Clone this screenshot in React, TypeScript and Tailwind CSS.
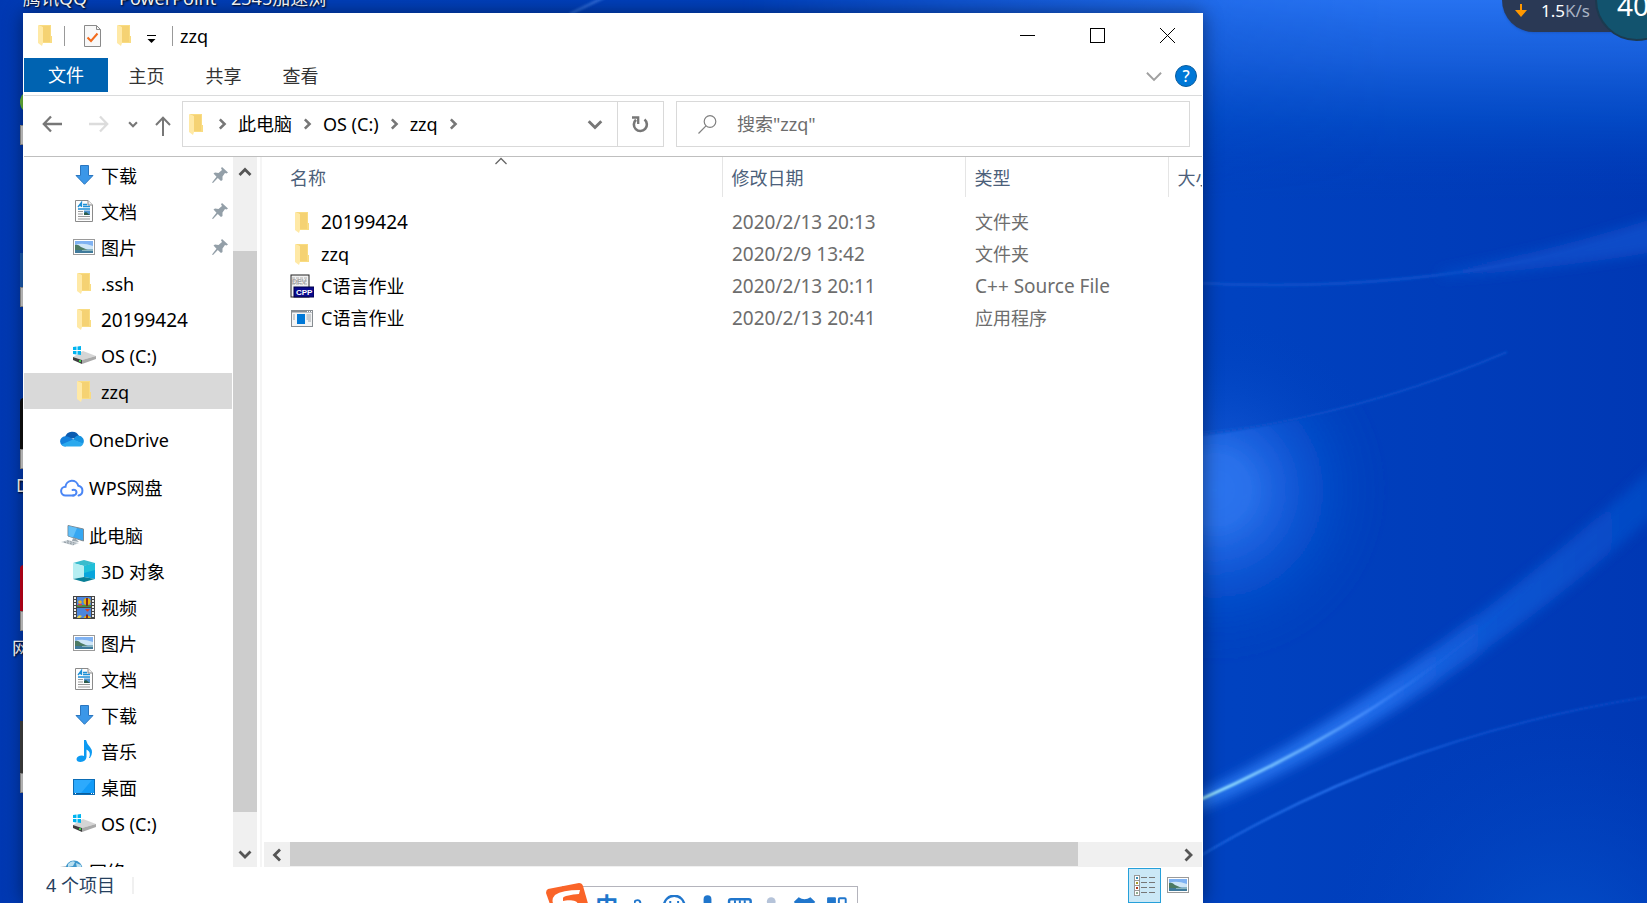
import { useState, type ReactNode } from 'react';

type IconName =
  | 'folder'
  | 'download'
  | 'document'
  | 'picture'
  | 'drive'
  | 'onedrive'
  | 'wps'
  | 'computer'
  | 'cube'
  | 'video'
  | 'music'
  | 'desktop'
  | 'network'
  | 'cpp'
  | 'exe';

interface NavItem {
  id: string;
  label: string;
  icon: IconName;
  pinned?: boolean;
  big?: boolean;
}

interface NavGroup {
  root?: NavItem;
  items: NavItem[];
}

interface FileEntry {
  id: string;
  name: string;
  icon: IconName;
  date: string;
  type: string;
  bigName?: boolean;
  bigType?: boolean;
}

const NAV_GROUPS: NavGroup[] = [
  {
    items: [
      { id: 'q-download', label: '下载', icon: 'download', pinned: true },
      { id: 'q-docs', label: '文档', icon: 'document', pinned: true },
      { id: 'q-pics', label: '图片', icon: 'picture', pinned: true },
      { id: 'q-ssh', label: '.ssh', icon: 'folder' },
      { id: 'q-2019', label: '20199424', icon: 'folder', big: true },
      { id: 'q-os', label: 'OS (C:)', icon: 'drive' },
      { id: 'q-zzq', label: 'zzq', icon: 'folder' },
    ],
  },
  { root: { id: 'onedrive', label: 'OneDrive', icon: 'onedrive' }, items: [] },
  { root: { id: 'wps', label: 'WPS网盘', icon: 'wps' }, items: [] },
  {
    root: { id: 'pc', label: '此电脑', icon: 'computer' },
    items: [
      { id: 'pc-3d', label: '3D 对象', icon: 'cube' },
      { id: 'pc-video', label: '视频', icon: 'video' },
      { id: 'pc-pics', label: '图片', icon: 'picture' },
      { id: 'pc-docs', label: '文档', icon: 'document' },
      { id: 'pc-download', label: '下载', icon: 'download' },
      { id: 'pc-music', label: '音乐', icon: 'music' },
      { id: 'pc-desktop', label: '桌面', icon: 'desktop' },
      { id: 'pc-os', label: 'OS (C:)', icon: 'drive' },
    ],
  },
  { root: { id: 'network', label: '网络', icon: 'network' }, items: [] },
];

const FILES: FileEntry[] = [
  { id: 'f1', name: '20199424', icon: 'folder', date: '2020/2/13 20:13', type: '文件夹', bigName: true },
  { id: 'f2', name: 'zzq', icon: 'folder', date: '2020/2/9 13:42', type: '文件夹' },
  { id: 'f3', name: 'C语言作业', icon: 'cpp', date: '2020/2/13 20:11', type: 'C++ Source File', bigType: true },
  { id: 'f4', name: 'C语言作业', icon: 'exe', date: '2020/2/13 20:41', type: '应用程序' },
];

const TABS = ['主页', '共享', '查看'];
const CRUMBS = ['此电脑', 'OS (C:)', 'zzq'];

function FolderIcon() {
  return (
    <svg width="14" height="21" viewBox="0 0 14 21" className="shrink-0">
      <path d="M1 0H13V11H14V18H4Z" fill="#f9dc82" />
      <path d="M4 1H12V17H4Z" fill="#f5d273" />
      <path d="M0 0L5 2V18L4 21L0 18Z" fill="#ffe9a6" />
    </svg>
  );
}

function PictureIcon() {
  return (
    <svg width="22" height="16" viewBox="0 0 22 16" className="shrink-0">
      <rect x="0.5" y="0.5" width="21" height="15" fill="#fff" stroke="#9a9a9a" />
      <rect x="2" y="2" width="18" height="12" fill="#7fb2f2" />
      <path d="M2 6Q9 3 20 7V10H2Z" fill="#cfe6f7" />
      <path d="M2 6Q5 5 8 8L15 11H2Z" fill="#4c7a63" />
      <path d="M2 11H20V14H2Z" fill="#3f7a9b" />
      <path d="M9 11L20 10V12H9Z" fill="#8cb6bf" />
    </svg>
  );
}

function Icon({ name }: { name: IconName }) {
  switch (name) {
    case 'folder':
      return <FolderIcon />;
    case 'picture':
      return <PictureIcon />;
    case 'download':
      return (
        <svg width="19" height="20" viewBox="0 0 19 20">
          <path d="M5.500.5H13.500V10.500H18L9.500 19.300L1 10.500H5.500Z" fill="#3b97e8" stroke="#2a76c0" />
        </svg>
      );
    case 'document':
      return (
        <svg width="18" height="22" viewBox="0 0 18 22">
          <path d="M.5.5H13L17.500 5V21.500H.5Z" fill="#fdfdfd" stroke="#8a8a8a" />
          <path d="M13 .5V5H17.500" fill="#eee" stroke="#8a8a8a" />
          <path d="M3 7L6.500 2.500V7M4.500 5.500H6.500M8 4.500H12M8 6.500H15M3 9H15" stroke="#1c8fd6" strokeWidth="1.300" fill="none" />
          <path d="M3 11.500H8M3 14H8M3 16.500H15M3 19H15" stroke="#999" />
          <rect x="9" y="10.500" width="6" height="4.500" fill="#4f93cf" />
          <path d="M9 13L11 12L15 15H9Z" fill="#2c5c4a" />
        </svg>
      );
    case 'drive':
      return (
        <svg width="23" height="18" viewBox="0 0 23 18">
          <path d="M0 11L10 5L23 10L9 14Z" fill="#d5d5d5" />
          <path d="M0 11L9 14V18L0 14Z" fill="#3e3e3e" />
          <path d="M9 14L23 10V13L9 18Z" fill="#a9a9a9" />
          <rect x="6" y="14" width="2" height="2" fill="#3fd04a" />
          <path d="M0 1L3.500.6V4H0ZM4.500.5L8 0V4H4.500ZM0 5H3.500V8.500L0 8ZM4.500 5H8V9L4.500 8.600Z" fill="#00b4f0" />
        </svg>
      );
    case 'onedrive':
      return (
        <svg width="24" height="16" viewBox="0 0 24 16">
          <path d="M5 6A7.500 7.500 0 0 1 19 5Q12 10 5 6Z" fill="#0a5bb0" />
          <path d="M5.500 15.500A5 5 0 0 1 5 5.200Q9 5 14 9Z" fill="#1380dc" />
          <path d="M18 4.500A5.600 5.600 0 0 1 23 13L13 9Q15 5 18 4.500Z" fill="#1692e0" />
          <path d="M1.500 13.500L13 8.500L23.300 12.500Q22.500 15.600 19 15.600H5.500Q3 15.600 1.500 13.500Z" fill="#2aa9ee" />
        </svg>
      );
    case 'wps':
      return (
        <svg width="24" height="19" viewBox="0 0 24 19" fill="none" stroke="#4a86f5" strokeWidth="2" strokeLinecap="round">
          <path d="M14 17.500H5.500A4.400 4.400 0 0 1 5.500 8.700A6.500 6.500 0 0 1 18.300 7.700A5 5 0 0 1 18.500 17.500" />
          <path d="M12.500 12Q16 11 16.500 14.200Q16.300 17.300 13 17.500" />
        </svg>
      );
    case 'computer':
      return (
        <svg width="24" height="21" viewBox="0 0 24 21">
          <path d="M8 .5L23.500 4V16L8 11Z" fill="#35a7f2" stroke="#7d8a94" />
          <path d="M8.500 1L17 3L13 12.500L8.500 11Z" fill="#62c0f8" />
          <path d="M13 13L16 14L19 17L12 16Z" fill="#9aa5ad" />
          <path d="M1 17L8 15L19 18L13 20.500Z" fill="#c8d0d6" />
          <path d="M4 17L14 19.500M7 15.800L16 18.500" stroke="#8e989f" strokeDasharray="2 1" />
        </svg>
      );
    case 'cube':
      return (
        <svg width="22" height="22" viewBox="0 0 22 22">
          <path d="M11 0L22 3L11 6L0 3Z" fill="#39bccd" />
          <path d="M0 3L11 6V17L0 19Z" fill="#b5eef2" />
          <path d="M11 6L22 3V19L11 17Z" fill="#08a5dc" />
          <path d="M11 6L22 3V10L11 13Z" fill="#20bfd8" />
          <path d="M0 19L11 17L22 19L11 22Z" fill="#087f96" />
        </svg>
      );
    case 'video':
      return (
        <svg width="22" height="23" viewBox="0 0 22 23">
          <rect width="22" height="23" fill="#454545" />
          <path d="M2 1V22M20 1V22" stroke="#eee" strokeWidth="2" strokeDasharray="2 1" />
          <path d="M4 1H18V11H4ZM4 12H18V22H4Z" fill="#4c86dc" />
          <path d="M4 9H18V11H4Z" fill="#4f8e3b" />
          <circle cx="14" cy="5.500" r="3.500" fill="#e8b20c" />
          <path d="M13 2H15V10H13Z" fill="#892a18" />
          <circle cx="7" cy="6" r="1.800" fill="#f2b51d" />
          <path d="M5 8H9V9.500H5Z" fill="#df3e55" />
          <path d="M12 13H17L15 15.500H14Z" fill="#d9402a" />
          <path d="M10.500 22A4 4 0 0 1 18 22Z" fill="#e8b20c" />
          <path d="M13 18.500H15V22H13Z" fill="#892a18" />
          <path d="M4 22Q5 18 9 20L7 22Z" fill="#e8d04b" />
        </svg>
      );
    case 'music':
      return (
        <svg width="17" height="22" viewBox="0 0 17 22">
          <path d="M8 0H10Q11 4 14 7Q18 12 14 18H13Q15.500 12 10.500 9.500V17Q10 21.500 4.500 22Q.5 22 .5 19Q1 15.500 6 15.500L8 16Z" fill="#0d9af2" />
        </svg>
      );
    case 'desktop':
      return (
        <svg width="22" height="16" viewBox="0 0 22 16">
          <rect x=".5" y=".5" width="21" height="15" fill="#129bf8" stroke="#0b6cb5" />
          <path d="M1 1H19L8 14H1Z" fill="#2daafd" />
          <path d="M1 14.500H21" stroke="#0a5d9c" />
          <path d="M2 14.500H3M18 14.500H19M20 14.500H21" stroke="#fff" />
        </svg>
      );
    case 'network':
      return (
        <svg width="24" height="22" viewBox="0 0 24 22">
          <circle cx="14" cy="9" r="8.500" fill="#3d96cb" />
          <path d="M8 4Q12 0 15 2L13 6L8 7ZM16 3L21 5L22 10L17 8Z" fill="#b9dff0" />
          <path d="M0 7L6 6V12L1 14Z" fill="#a8b3ba" />
          <path d="M2 16L12 14L18 18L8 21Z" fill="#c5ced5" />
        </svg>
      );
    case 'cpp':
      return (
        <svg width="24" height="24" viewBox="0 0 24 24">
          <rect x="1" y="1" width="18" height="22" fill="#f1f1f1" stroke="#222" />
          <path d="M2 4H18M2 7H18M2 10H17" stroke="#c4c4c4" strokeWidth="1.500" strokeDasharray="3 1" />
          <text x="2" y="10" fontSize="7" fontFamily="Liberation Sans, sans-serif" fontWeight="bold" fill="#a5a5a5">DEV</text>
          <rect x="4" y="13" width="20" height="10" fill="#0a0a8c" stroke="#000048" />
          <text x="6" y="21" fontSize="8" fontFamily="Liberation Sans, sans-serif" fontWeight="bold" fill="#fff">CPP</text>
        </svg>
      );
    case 'exe':
      return (
        <svg width="22" height="17" viewBox="0 0 22 17">
          <rect x=".5" y=".5" width="21" height="16" fill="#f3f4f5" stroke="#878d92" />
          <path d="M0 1.500H22" stroke="#878d92" strokeWidth="2" />
          <path d="M16 1.500H17M18 1.500H19M20 1.500H21" stroke="#fff" />
          <rect x="6" y="4" width="8" height="10" fill="#0078d7" />
          <path d="M2 5H4M2 7H4M2 9H4M15.500 5H20M15.500 7H20M15.500 9H20M17 11H20" stroke="#a0a5a9" />
        </svg>
      );
  }
}

function PinIcon() {
  return (
    <svg width="16" height="16" viewBox="0 0 16 16" fill="#939fa8" className="shrink-0">
      <path d="M10 0L16 5.500L14.500 6.500L13 6L10.500 9.500L10.500 13L9 14L5.800 11L1 16L0 15.500L4.500 9.800L1.500 6.500L3 5.500L6.500 6L10 3L9 1.200Z" />
    </svg>
  );
}

interface ChevronProps {
  dir: 'up' | 'down' | 'left' | 'right';
  size?: number;
  color?: string;
  weight?: number;
}

function Chevron({ dir, size = 14, color = '#777', weight = 2.5 }: ChevronProps) {
  const paths = {
    up: 'M1.500 10L7 4.500L12.500 10',
    down: 'M1.500 4.500L7 10L12.500 4.500',
    left: 'M10 1.500L4.500 7L10 12.500',
    right: 'M4.500 1.500L10 7L4.500 12.500',
  };
  return (
    <svg width={size} height={size} viewBox="0 0 14 14" fill="none" stroke={color} strokeWidth={weight} className="shrink-0">
      <path d={paths[dir]} />
    </svg>
  );
}

function Wallpaper() {
  return (
    <svg className="absolute inset-0 h-full w-full" viewBox="0 0 1647 903" preserveAspectRatio="none" aria-hidden="true">
      <defs>
        <linearGradient id="base" x1="0" y1="0" x2="1" y2="0">
          <stop offset="0" stopColor="#0038b2" />
          <stop offset="0.03" stopColor="#003eb8" />
          <stop offset="0.75" stopColor="#0042c0" />
          <stop offset="1" stopColor="#0038b4" />
        </linearGradient>
        <linearGradient id="topGlow" x1="0" y1="0" x2="0" y2="1">
          <stop offset="0" stopColor="#2672f0" />
          <stop offset="0.3" stopColor="#1a64e0" stopOpacity="0.85" />
          <stop offset="0.6" stopColor="#0450cb" stopOpacity="0.7" />
          <stop offset="1" stopColor="#003cba" stopOpacity="0" />
        </linearGradient>
        <linearGradient id="topMask" x1="0" y1="0" x2="1" y2="0">
          <stop offset="0.45" stopColor="#fff" stopOpacity="0" />
          <stop offset="0.75" stopColor="#fff" stopOpacity="0.9" />
          <stop offset="0.85" stopColor="#fff" />
        </linearGradient>
        <mask id="rightSide">
          <rect width="1647" height="903" fill="url(#topMask)" />
        </mask>
        <radialGradient id="orb" gradientUnits="userSpaceOnUse" cx="1215" cy="490" r="175">
          <stop offset="0" stopColor="#2b74ee" />
          <stop offset="0.2" stopColor="#2b74ee" stopOpacity="0.92" />
          <stop offset="0.4" stopColor="#2068e6" stopOpacity="0.7" />
          <stop offset="0.6" stopColor="#105cda" stopOpacity="0.45" />
          <stop offset="0.8" stopColor="#0650cc" stopOpacity="0.2" />
          <stop offset="1" stopColor="#0046c2" stopOpacity="0" />
        </radialGradient>
        <radialGradient id="corner" gradientUnits="userSpaceOnUse" cx="1560" cy="960" r="240">
          <stop offset="0" stopColor="#0450ca" />
          <stop offset="1" stopColor="#0042c0" stopOpacity="0" />
        </radialGradient>
        <linearGradient id="ray" gradientUnits="userSpaceOnUse" x1="1203" y1="0" x2="1540" y2="0">
          <stop offset="0" stopColor="#a4f0ff" />
          <stop offset="0.2" stopColor="#78c2ff" />
          <stop offset="0.5" stopColor="#3f86fa" />
          <stop offset="0.7" stopColor="#1d66e4" stopOpacity="0.4" />
          <stop offset="1" stopColor="#0c55d0" stopOpacity="0" />
        </linearGradient>
        <linearGradient id="rayHalo" gradientUnits="userSpaceOnUse" x1="1203" y1="0" x2="1647" y2="0">
          <stop offset="0" stopColor="#2c7af2" />
          <stop offset="0.4" stopColor="#2470ee" />
          <stop offset="0.65" stopColor="#0f58d6" />
          <stop offset="1" stopColor="#044ac6" />
        </linearGradient>
        <linearGradient id="ray2" gradientUnits="userSpaceOnUse" x1="1203" y1="0" x2="1647" y2="0">
          <stop offset="0" stopColor="#1a60dc" />
          <stop offset="0.3" stopColor="#2e79f4" />
          <stop offset="0.6" stopColor="#1259d8" stopOpacity="0.8" />
          <stop offset="1" stopColor="#0a4cca" stopOpacity="0.7" />
        </linearGradient>
        <filter id="soft4" x="-20%" y="-20%" width="140%" height="140%">
          <feGaussianBlur stdDeviation="6" />
        </filter>
        <filter id="soft1" x="-20%" y="-20%" width="140%" height="140%">
          <feGaussianBlur stdDeviation="1" />
        </filter>
      </defs>
      <rect width="1647" height="903" fill="url(#base)" />
      <rect width="1647" height="200" fill="url(#topGlow)" mask="url(#rightSide)" />
      <path d="M1100 440Q1280 432 1400 394V700H1100Z" fill="url(#orb)" filter="url(#soft1)" />
      <path d="M1100 300H1400V394Q1280 432 1100 440Z" fill="url(#orb)" opacity="0.4" />
      <rect x="1200" y="700" width="447" height="203" fill="url(#corner)" />
      <g fill="none">
        <path d="M1180 282Q1427 298 1647 231" stroke="#0c50ca" strokeWidth="3" filter="url(#soft1)" />
        <path d="M1440 272Q1580 246 1720 196V240Q1580 268 1440 277Z" fill="#0a4cc8" filter="url(#soft4)" />
        <path d="M1180 437Q1347 420 1507 352" stroke="#0b50ca" strokeWidth="2" filter="url(#soft1)" />
        <path d="M1185 800Q1429 684 1720 405V455Q1449 712 1185 816Z" fill="url(#rayHalo)" filter="url(#soft4)" opacity="0.9" />
        <path d="M1195 802Q1400 712 1540 577" stroke="url(#ray)" strokeWidth="3" filter="url(#soft1)" />
        <path d="M1195 859Q1399 736 1647 697" stroke="url(#ray2)" strokeWidth="2" filter="url(#soft1)" />
      </g>
      <path d="M570 14L605 -3" stroke="#2a68d8" strokeWidth="3" filter="url(#soft1)" />
    </svg>
  );
}

// Shortcuts on the desktop, mostly covered by the explorer window
function DesktopShortcuts() {
  return (
    <div className="text-[18px] leading-6 text-white [text-shadow:1px_1px_2px_#000]">
      <span className="absolute -top-3.5 left-[23px]">腾讯QQ</span>
      <span className="absolute -top-3.5 left-[119px]">PowerPoint</span>
      <span className="absolute -top-3.5 left-[231px]">2345加速浏</span>
      <div className="absolute left-5 top-[90px] h-6 w-6 rounded-full bg-[#6dc03c]" />
      <div className="absolute left-5 top-[125px] h-5 w-5 border border-[#999] bg-[#ddd]" />
      <div className="absolute left-5 top-[253px] h-[54px] w-5 bg-[#1d5fb8]" />
      <div className="absolute left-5 top-[287px] h-5 w-5 border border-[#999] bg-[#ddd]" />
      <div className="absolute left-5 top-[398px] h-[52px] w-5 rounded-tl bg-[#111]" />
      <div className="absolute left-5 top-[449px] h-5 w-5 border border-[#999] bg-[#ddd]" />
      <span className="absolute left-4 top-[473px]">D</span>
      <div className="absolute left-5 top-[565px] h-[52px] w-5 rounded-tl bg-[#d0021b]" />
      <div className="absolute left-5 top-[611px] h-5 w-5 border border-[#999] bg-[#ddd]" />
      <span className="absolute left-3 top-[636px]">网</span>
      <div className="absolute left-5 top-[721px] h-[52px] w-5 bg-[#444]" />
      <div className="absolute left-5 top-[773px] h-5 w-5 border border-[#999] bg-[#ddd]" />
    </div>
  );
}

function SpeedWidget() {
  return (
    <div className="absolute right-0 top-0 h-[42px] w-[145px] overflow-hidden">
      <div className="flex h-8 items-center gap-3.5 rounded-bl-[32px] bg-[#2a3955] pb-2.5 pl-[13px] text-white shadow">
        <svg width="12" height="14" viewBox="0 0 12 14">
          <path d="M5 0H7V6H12L6 13L0 6H5Z" fill="#ff9800" />
        </svg>
        <span className="text-[17px] leading-6">
          1.5<span className="text-[#a9b3c4]">K/s</span>
        </span>
      </div>
      <div className="absolute -top-[42px] left-[93px] flex h-[83px] w-[83px] items-end rounded-full border-2 border-[#1c3a4f] bg-[#12536e] pb-[22px] pl-5">
        <span className="text-[28px] leading-6 text-white">40</span>
      </div>
    </div>
  );
}

function TitleBar() {
  return (
    <header className="flex h-[45px] shrink-0 items-center pl-[14px]">
      <FolderIcon />
      <div className="ml-3 h-5 w-px bg-[#999]" />
      <button aria-label="属性" className="ml-[19px]">
        <svg width="17" height="22" viewBox="0 0 17 22">
          <path d="M.5.5H12.500L16.500 4.500V21.500H.5Z" fill="#f8f8f8" stroke="#8a8a8a" />
          <path d="M12.500.5V4.500H16.500" fill="none" stroke="#8a8a8a" />
          <path d="M3.500 12.500L7 16L13.500 8.500" fill="none" stroke="#f26a1b" strokeWidth="2" />
        </svg>
      </button>
      <button aria-label="新建文件夹" className="ml-4">
        <FolderIcon />
      </button>
      <button aria-label="自定义快速访问工具栏" className="ml-4 mt-2">
        <svg width="9" height="9" viewBox="0 0 9 9">
          <path d="M0 .5H9" stroke="#000" />
          <path d="M.5 4H8.500L4.500 8Z" />
        </svg>
      </button>
      <div className="ml-4 h-5 w-px bg-[#999]" />
      <h1 className="ml-[7px] text-[18px] leading-6">zzq</h1>
      <div className="ml-auto flex items-center gap-[55px] pr-[27px]">
        <button aria-label="最小化">
          <svg width="15" height="15" viewBox="0 0 15 15">
            <path d="M0 7.500H15" stroke="#000" />
          </svg>
        </button>
        <button aria-label="最大化">
          <svg width="15" height="15" viewBox="0 0 15 15">
            <rect x="0.5" y="0.5" width="14" height="14" fill="none" stroke="#000" />
          </svg>
        </button>
        <button aria-label="关闭">
          <svg width="15" height="15" viewBox="0 0 15 15">
            <path d="M0 0L15 15M15 0L0 15" stroke="#000" />
          </svg>
        </button>
      </div>
    </header>
  );
}

function Ribbon() {
  return (
    <nav className="flex h-[38px] shrink-0 items-start border-b border-[#dadbdc] text-[18px] text-[#333]">
      <button className="h-[34px] w-[84px] bg-[#0063b1] text-white">文件</button>
      {TABS.map((tab) => (
        <button key={tab} className="h-9 w-[77px]">
          {tab}
        </button>
      ))}
      <div className="ml-auto flex h-9 items-center gap-3 pr-[5px]">
        <button aria-label="展开功能区">
          <Chevron dir="down" size={18} color="#a0a0a0" weight={1.5} />
        </button>
        <button
          aria-label="帮助"
          className="h-[22px] w-[22px] rounded-full border border-[#0a5c9e] bg-[#0078d7] text-[16px] leading-5 font-medium text-white"
        >
          ?
        </button>
      </div>
    </nav>
  );
}

function AddressBar() {
  return (
    <div className="flex h-[61px] shrink-0 items-start border-b border-[#bfbfbf] pr-3 pt-[5px]">
      <div className="flex h-[46px] w-[158px] shrink-0 items-center pl-[18px]">
        <button aria-label="后退">
          <svg width="20" height="18" viewBox="0 0 20 18" fill="none" stroke="#777" strokeWidth="2.300">
            <path d="M20 9H2M9 1.500L1.800 9L9 16.500" />
          </svg>
        </button>
        <button aria-label="前进" className="ml-[27px]">
          <svg width="20" height="18" viewBox="0 0 20 18" fill="none" stroke="#dcdcdc" strokeWidth="2.300">
            <path d="M0 9H18M11 1.500L18.200 9L11 16.500" />
          </svg>
        </button>
        <button aria-label="最近的位置" className="ml-[19px]">
          <Chevron dir="down" size={10} weight={3} />
        </button>
        <button aria-label="上移" className="ml-[17px] mt-1">
          <svg width="16" height="20" viewBox="0 0 16 20" fill="none" stroke="#777" strokeWidth="2">
            <path d="M8 20V2M1 9L8 1.800L15 9" />
          </svg>
        </button>
      </div>
      <div className="flex h-[46px] flex-1 items-center border border-[#d9d9d9] text-[18px]">
        <span className="mr-1 ml-1.5">
          <FolderIcon />
        </span>
        {CRUMBS.map((crumb) => (
          <div key={crumb} className="flex items-center">
            <span className="ml-[9px]">
              <Chevron dir="right" size={12} weight={3} />
            </span>
            <button className="ml-2.5 leading-6">{crumb}</button>
          </div>
        ))}
        <span className="ml-[9px]">
          <Chevron dir="right" size={12} weight={3} />
        </span>
        <button aria-label="历史记录" className="ml-auto mr-3.5">
          <Chevron dir="down" size={16} />
        </button>
        <button aria-label="刷新" className="flex h-full w-[46px] items-center justify-center border-l border-[#d9d9d9]">
          <svg width="17" height="17" viewBox="0 0 17 17" fill="none" stroke="#777" strokeWidth="2.600">
            <path d="M12.500 3.500A6.500 6.500 0 1 1 4 3.700" />
            <path d="M0 1.500H6.200V8" strokeWidth="2.300" />
          </svg>
        </button>
      </div>
      <label className="ml-3 flex h-[46px] w-[514px] shrink-0 items-center border border-[#d9d9d9] pl-[21px]">
        <svg width="19" height="19" viewBox="0 0 19 19" fill="none" stroke="#808080" strokeWidth="1.200">
          <circle cx="12" cy="6.500" r="5.800" />
          <path d="M8 10.800L.5 18.500" />
        </svg>
        <input
          type="text"
          aria-label="搜索"
          placeholder={'搜索"zzq"'}
          className="ml-5 min-w-0 flex-1 text-[18px] outline-none placeholder:text-[#6d6d6d]"
        />
      </label>
    </div>
  );
}

interface NavRowProps {
  item: NavItem;
  root?: boolean;
  selected: boolean;
  onSelect: (id: string) => void;
}

function NavRow({ item, root, selected, onSelect }: NavRowProps) {
  return (
    <button
      onClick={() => onSelect(item.id)}
      className={`flex h-9 w-full shrink-0 items-center pr-1 text-left leading-6 ${root ? 'pl-9' : 'pl-12'} ${
        selected ? 'bg-[#d9d9d9]' : ''
      } ${item.big ? 'text-[19px]' : 'text-[18px]'}`}
    >
      <span className="flex w-6 shrink-0 justify-center">
        <Icon name={item.icon} />
      </span>
      <span className="ml-[5px] flex-1 pt-0.5">{item.label}</span>
      {item.pinned && <PinIcon />}
    </button>
  );
}

function Sidebar() {
  const [selected, setSelected] = useState('q-zzq');

  return (
    <aside className="flex shrink-0">
      <div className="flex w-[208px] flex-col gap-3 overflow-hidden">
        {NAV_GROUPS.map((group, i) => (
          <div key={i} className="flex shrink-0 flex-col">
            {group.root && (
              <NavRow item={group.root} root selected={selected === group.root.id} onSelect={setSelected} />
            )}
            {group.items.map((item) => (
              <NavRow key={item.id} item={item} selected={selected === item.id} onSelect={setSelected} />
            ))}
          </div>
        ))}
      </div>
      <div className="ml-px flex w-6 flex-col items-center bg-[#f0f0f0]">
        <ScrollButton dir="up" className="h-[94px] items-start pt-2" />
        <div className="w-full flex-1 bg-[#cdcdcd]" />
        <ScrollButton dir="down" className="h-[55px] items-end pb-1.5" />
      </div>
      <div className="ml-[3px] w-0.5 bg-[#f5f5f5]" />
    </aside>
  );
}

function ScrollButton({ dir, className }: { dir: ChevronProps['dir']; className: string }) {
  return (
    <button aria-label={`滚动 ${dir}`} className={`flex shrink-0 justify-center ${className}`}>
      <Chevron dir={dir} size={14} color="#555" weight={2.8} />
    </button>
  );
}

function HeaderCell({ children }: { children: ReactNode }) {
  return (
    <th className="overflow-hidden border-l border-[#e5e5e5] pt-0.5 pl-[9px] text-left font-normal whitespace-nowrap">
      {children}
    </th>
  );
}

function FileList() {
  return (
    <main className="flex min-w-0 flex-1 flex-col">
      <div className="min-h-0 flex-1 overflow-hidden">
        <table className="w-full table-fixed border-collapse text-[18px] leading-6">
          <colgroup>
            <col />
            <col className="w-[243px]" />
            <col className="w-[203px]" />
            <col className="w-[34px]" />
          </colgroup>
          <thead className="text-[#4c607a]">
            <tr className="h-10">
              <th className="relative pt-0.5 pl-7 text-left font-normal">
                名称
                <span className="absolute -top-[3px] left-1/2 ml-0.5">
                  <Chevron dir="up" size={14} color="#666" weight={1.3} />
                </span>
              </th>
              <HeaderCell>修改日期</HeaderCell>
              <HeaderCell>类型</HeaderCell>
              <HeaderCell>大小</HeaderCell>
            </tr>
          </thead>
          <tbody className="text-[#6d6d6d] before:block before:h-[9px]">
            {FILES.map((file) => (
              <tr key={file.id} className="h-8">
                <td className="pl-7">
                  <div className="flex items-center text-black">
                    <span className="flex w-6 shrink-0 justify-center">
                      <Icon name={file.icon} />
                    </span>
                    <span className={`ml-[7px] ${file.bigName ? 'text-[19px]' : 'text-[18px]'}`}>{file.name}</span>
                  </div>
                </td>
                <td className="pl-2.5 text-[19px]">{file.date}</td>
                <td className={`pl-2.5 ${file.bigType ? 'text-[19px]' : 'text-[18px]'}`}>{file.type}</td>
                <td />
              </tr>
            ))}
          </tbody>
        </table>
      </div>
      <div className="ml-0.5 flex h-[25px] shrink-0 items-stretch bg-[#f0f0f0]">
        <ScrollButton dir="left" className="w-[26px] items-center" />
        <div className="mb-px flex-1 bg-[#cdcdcd]" />
        <ScrollButton dir="right" className="ml-[84px] w-[40px] items-center pl-3" />
      </div>
    </main>
  );
}

function StatusBar() {
  const marks = ['#3a8fb5', '#a79a2a', '#b33a22', '#8fae8f'];
  return (
    <footer className="flex h-9 shrink-0 items-center pl-[22px] pr-[13px]">
      <span className="text-[18px] leading-6 text-[#26405e]">4 个项目</span>
      <div className="ml-[17px] h-[17px] w-0.5 bg-[#f0f0f0]" />
      <button
        aria-label="详细信息"
        className="ml-auto flex h-[35px] w-[33px] items-center justify-center border border-[#26a0da] bg-[#cbe8f6]"
      >
        <svg width="21" height="21" viewBox="0 0 21 21">
          {marks.map((color, i) => (
            <g key={color}>
              <rect x="0.5" y={i * 5 + 0.5} width="5" height="5" fill="#fff" stroke="#999" />
              <rect x="2" y={i * 5 + 2} width="2" height="2" fill={color} />
              <path d={`M7 ${i * 5 + 2.5}H13M15 ${i * 5 + 2.5}H21`} stroke="#777" />
            </g>
          ))}
        </svg>
      </button>
      <button aria-label="大缩略图" className="ml-1.5">
        <PictureIcon />
      </button>
    </footer>
  );
}

function ImeBar() {
  return (
    <div className="absolute bottom-0 left-[546px] h-5 w-[312px] overflow-hidden">
      <div className="mt-[3px] ml-4 flex h-10 items-start gap-[15px] border border-[#b4b4bc] bg-white pt-2 pl-8">
        <span className="-mt-0.5 w-6 text-center text-[23px] leading-6 font-bold text-[#2076cc]">中</span>
        <svg width="228" height="24" viewBox="0 0 228 24" fill="none" stroke="#2076cc" strokeWidth="2">
          <circle cx="3.500" cy="8" r="3" />
          <circle cx="41" cy="11" r="10.500" strokeWidth="2.500" />
          <path d="M37 6V10M45 6V10" />
          <rect x="71" y="0" width="8" height="15" rx="4" fill="#2076cc" stroke="none" />
          <rect x="97" y="4" width="22" height="15" rx="2" strokeWidth="2.500" />
          <path d="M101 9H115M103 5V9M108 5V9M113 5V9" />
          <circle cx="140" cy="6.500" r="4.500" fill="#b5c3d9" stroke="none" />
          <path d="M168 2Q174 6 180 2L185 7L181 10V20H167V10L163 7Z" fill="#2076cc" stroke="none" />
          <rect x="197" y="2" width="9" height="16" rx="1" fill="#2076cc" stroke="none" />
          <rect x="209" y="3" width="7" height="10" rx="1" />
        </svg>
      </div>
      <svg width="44" height="20" viewBox="0 0 44 20" className="absolute left-0 top-0">
        <path d="M2 6L33 0Q36 0 37 3L43 24H5L0 10Q0 7 2 6Z" fill="#fa6428" />
        <path d="M34 7Q16 7 9 12Q4 17 9 24H30Q36 17 20 17Q14 15 20 13Q28 11 33 11Z" fill="#fff" />
        <path d="M17 15Q24 12 33 15V18Q26 16 17 18Z" fill="#fa6428" />
      </svg>
    </div>
  );
}

export default function App() {
  return (
    <div className="relative h-screen w-full overflow-hidden bg-[#003cb8] font-['Noto_Sans','Noto_Sans_CJK_SC',sans-serif] text-black">
      <Wallpaper />
      <DesktopShortcuts />
      <SpeedWidget />
      <section className="absolute top-[13px] right-[444px] bottom-0 left-[23px] flex flex-col bg-white px-px shadow-[0_0_18px_rgba(0,0,0,0.45)]">
        <TitleBar />
        <Ribbon />
        <AddressBar />
        <div className="flex min-h-0 flex-1">
          <Sidebar />
          <FileList />
        </div>
        <StatusBar />
      </section>
      <ImeBar />
    </div>
  );
}
